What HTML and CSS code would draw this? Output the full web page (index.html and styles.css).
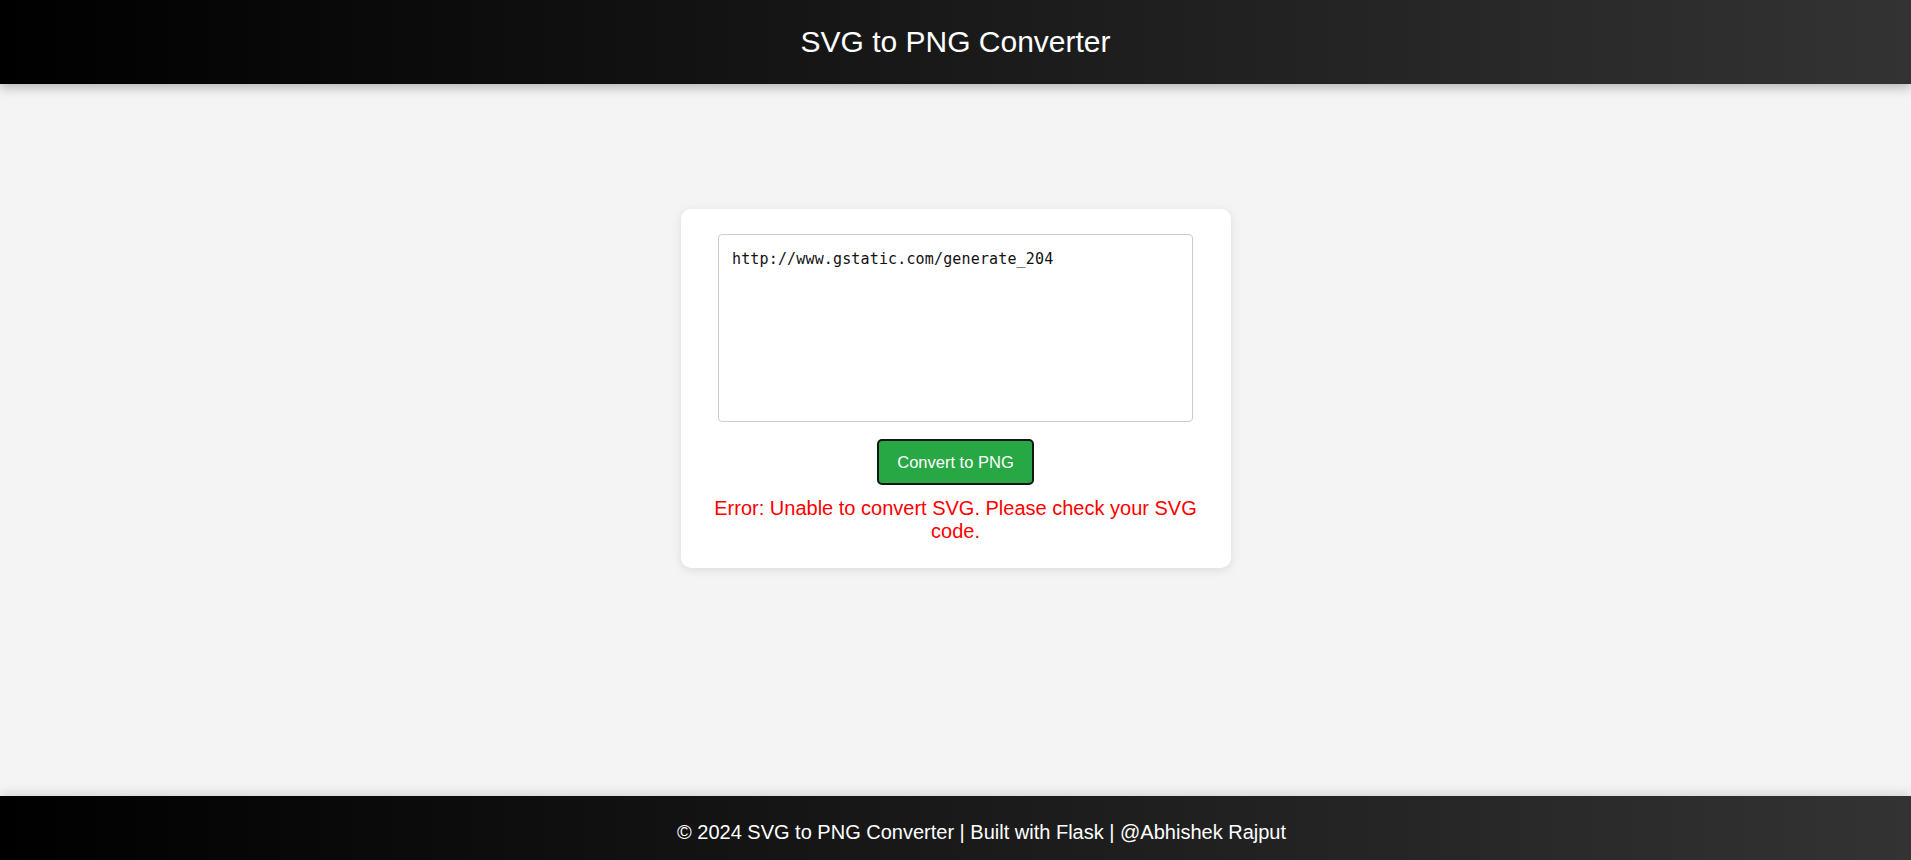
FILE: index.html
```html
<!DOCTYPE html>
<html lang="en">
<head>
<meta charset="utf-8">
<title>SVG to PNG Converter</title>
<link rel="stylesheet" href="styles.css">
</head>
<body>
<header class="site-header">
  <h1 class="site-title">SVG to PNG Converter</h1>
</header>
<main class="main">
  <div class="card">
    <textarea class="svg-input">http://www.gstatic.com/generate_204</textarea>
    <button class="convert-btn" type="button">Convert to PNG</button>
    <p class="error">Error: Unable to convert SVG. Please check your SVG code.</p>
  </div>
</main>
<footer class="site-footer">
  <p class="footer-text">© 2024 SVG to PNG Converter | Built with Flask | @Abhishek Rajput</p>
</footer>
</body>
</html>
```

FILE: styles.css
```css
* { box-sizing: border-box; }

html, body {
  margin: 0;
  padding: 0;
  height: 100%;
}

body {
  font-family: "Liberation Sans", Arial, sans-serif;
  background: #f4f4f4;
  display: flex;
  flex-direction: column;
  height: 100vh;
  overflow: hidden;
}

.site-header {
  background: linear-gradient(to right, #000000, #333333);
  color: #fff;
  padding: 25px 0;
  text-align: center;
  box-shadow: 0 4px 10px rgba(0, 0, 0, 0.25);
  position: relative;
  z-index: 2;
}

.site-title {
  margin: 0;
  font-size: 30px;
  font-weight: normal;
  line-height: 34px;
}

.main {
  flex: 1;
  display: flex;
  justify-content: center;
  align-items: flex-start;
  padding-top: 125px;
}

.card {
  width: 550px;
  background: #fff;
  border-radius: 10px;
  padding: 25px;
  box-shadow: 0 2px 10px rgba(0, 0, 0, 0.1);
  display: flex;
  flex-direction: column;
  align-items: center;
  text-align: center;
}

.svg-input {
  display: block;
  width: 95%;
  height: 188px;
  margin: 0 0 17px;
  padding: 15px 13px;
  border: 1px solid #cccccc;
  border-radius: 4px;
  font-family: "DejaVu Sans Mono", "Liberation Mono", monospace;
  font-size: 15px;
  letter-spacing: 0.15px;
  color: #111;
  resize: none;
  background: #fff;
}

.convert-btn {
  background: #28a745;
  color: #fff;
  border: 2px solid #151515;
  border-radius: 5px;
  padding: 12px 18px;
  font-family: "Liberation Sans", Arial, sans-serif;
  font-size: 16.5px;
  line-height: 18px;
  cursor: pointer;
}

.error {
  margin: 12px 0 0;
  color: #ff0000;
  font-size: 20px;
  line-height: 23px;
}

.site-footer {
  background: linear-gradient(to right, #000000, #333333);
  color: #fff;
  text-align: center;
  height: 64px;
  padding: 25px 0 0 52px;
  box-shadow: 0 -3px 10px rgba(0, 0, 0, 0.12);
  position: relative;
}

.footer-text {
  margin: 0;
  font-size: 20px;
  line-height: 23px;
}
```
